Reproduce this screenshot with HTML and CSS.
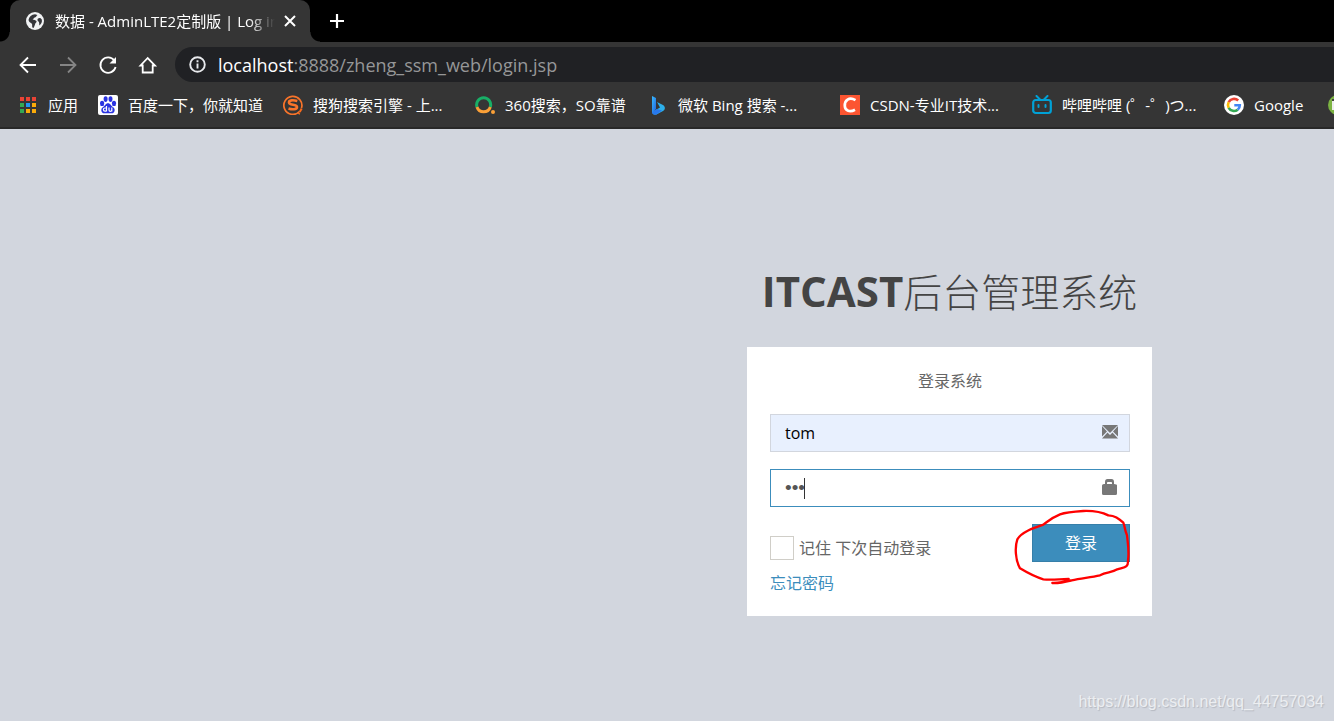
FILE: index.html
```html
<!DOCTYPE html>
<html lang="zh-CN">
<head>
<meta charset="utf-8">
<title>数据 - AdminLTE2定制版 | Log in</title>
<link rel="stylesheet" href="styles.css">
</head>
<body>
<header class="browser">
  <div class="tabs">
    <div class="tab">
      <svg class="favicon" viewBox="0 0 18 18"><circle cx="9" cy="9" r="9" fill="#f1f3f4"/><path d="M2.500 8C3 4.500 5.500 2.500 9 2.200L11.500 3C10 4 10.500 5 9 5.500C7.500 5.500 8 7 6.500 7.500C8 8 9.500 8 10.500 9C11 10.500 9 11 9 12.500C8.500 14 8 15 7.500 16C5.500 15.500 6.500 13.500 6 12C5 10.500 3 10.500 2.500 8Z" fill="#35363a"/><path d="M12 6.500C13.500 5.500 15 6 15.800 7.500C16.500 10 15 12 13.500 13.500C13 12 13.500 10.500 12.500 9.500C11.500 9 11 7.500 12 6.500Z" fill="#35363a"/></svg>
      <span class="tab-title">数据 - AdminLTE2定制版 | Log in</span>
      <button class="icon-button" aria-label="关闭"><svg width="14" height="14" viewBox="0 0 14 14"><path d="M2 2L12 12M12 2L2 12" stroke="#fff" stroke-width="2"/></svg></button>
    </div>
    <button class="icon-button new-tab" aria-label="新标签页"><svg width="16" height="16" viewBox="0 0 16 16"><path d="M8 1V15M1 8H15" stroke="#fff" stroke-width="2.200"/></svg></button>
  </div>
  <div class="toolbar">
    <nav class="controls">
      <button class="icon-button" aria-label="后退"><svg width="20" height="20" viewBox="0 0 20 20"><path d="M18 10H3M10 2.500L2.500 10L10 17.500" fill="none" stroke="#fff" stroke-width="1.800"/></svg></button>
      <button class="icon-button" aria-label="前进"><svg width="20" height="20" viewBox="0 0 20 20"><path d="M2 10H17M10 2.500L17.500 10L10 17.500" fill="none" stroke="#858585" stroke-width="1.800"/></svg></button>
      <button class="icon-button" aria-label="刷新"><svg width="20" height="20" viewBox="0 0 20 20"><path d="M16.300 5.500A7.700 7.700 0 1 0 17.600 12" fill="none" stroke="#fff" stroke-width="1.800"/><path d="M18 2V8.500H11.500Z" fill="#fff"/></svg></button>
      <button class="icon-button" aria-label="主页"><svg width="20" height="20" viewBox="0 0 20 20"><path d="M2.500 10.500H4.700V17.500H14.700V10.500H17L9.700 3Z" fill="none" stroke="#fff" stroke-width="1.800"/></svg></button>
    </nav>
    <div class="omnibox">
      <svg width="17" height="17" viewBox="0 0 17 17"><circle cx="8.500" cy="8.500" r="7.300" fill="none" stroke="#e8eaed" stroke-width="1.900"/><path d="M8.500 7.500V12.500M8.500 4.300V6.200" stroke="#e8eaed" stroke-width="1.900"/></svg>
      <span class="url"><span class="host">localhost</span>:8888/zheng_ssm_web/login.jsp</span>
    </div>
  </div>
  <nav class="bookmarks">
    <a class="bookmark apps" href="#"><svg viewBox="0 0 20 20"><g fill="#ea4335"><path d="M2 2h4v4H2zM8 2h4v4H8zM14 2h4v4h-4z"/></g><path d="M2 8h4v4H2zM2 14h4v4H2z" fill="#34a853"/><path d="M8 8h4v4H8z" fill="#2196f3"/><path d="M14 8h4v4h-4zM8 14h4v4H8zM14 14h4v4h-4z" fill="#fbab09"/></svg><span>应用</span></a>
    <a class="bookmark baidu" href="#"><svg viewBox="0 0 20 20"><rect width="20" height="20" rx="2" fill="#fff"/><g fill="#2932e1"><ellipse cx="4.100" cy="8.400" rx="2.100" ry="2.700"/><ellipse cx="7.600" cy="4.100" rx="2" ry="2.800"/><ellipse cx="12.500" cy="4.100" rx="2" ry="2.800"/><ellipse cx="16" cy="8.400" rx="2.100" ry="2.700"/><path d="M10 8.200C12.500 8.200 13 11 15.200 12.200C18 14.300 16.500 18.500 13.500 18.300H6.500C3.500 18.500 2 14.300 4.800 12.200C7 11 7.500 8.200 10 8.200Z"/></g><path d="M8.500 11V16.300M8.500 13H7A1.500 1.500 0 0 0 7 16.200H8.500M11 12.500V15A1.300 1.300 0 0 0 13.800 15V12.500M13.800 15V16.500" fill="none" stroke="#fff" stroke-width="1.200"/></svg><span>百度一下，你就知道</span></a>
    <a class="bookmark long" href="#"><svg viewBox="0 0 20 20"><path d="M16.500 16.500A9 9 0 1 1 18.500 13" fill="none" stroke="#f9742a" stroke-width="1.700"/><path d="M14.300 6C10 4.800 6 5 6 7.500C6 10.500 14 9 14 12C14 14.800 9 14.700 5.500 13.500" fill="none" stroke="#f9742a" stroke-width="2.600"/><path d="M18.700 13.500L16.700 17M16.400 18L15.700 19.200" stroke="#f96a1b" stroke-width="2"/></svg><span>搜狗搜索引擎 - 上...</span></a>
    <a class="bookmark so" href="#"><svg viewBox="0 0 20 20"><path d="M2 12A7 7 0 1 1 15.300 12" fill="none" stroke="#18af67" stroke-width="3"/><path d="M2 12A7 7 0 0 0 15.300 12" fill="none" stroke="#fba037" stroke-width="3"/><circle cx="18" cy="17" r="2" fill="#fba037"/></svg><span>360搜索，SO靠谱</span></a>
    <a class="bookmark long" href="#"><svg viewBox="0 0 20 20"><defs><linearGradient id="bing" x2="1" y2="1"><stop stop-color="#37bdff"/><stop offset="1" stop-color="#2461db"/></linearGradient></defs><path d="M4 1L8 3V14L4 18Z" fill="url(#bing)"/><path d="M4 17L12 12.500L9 7L15 10C18 12 17 15 15 16L8.500 19.500C6 20 4 19 4 17Z" fill="#2dafe9"/><path d="M4 17L9 14L14 15.500L8.500 19.500C6 20 4 19 4 17Z" fill="#2877ed"/></svg><span>微软 Bing 搜索 -...</span></a>
    <a class="bookmark long" href="#"><svg viewBox="0 0 20 20"><path d="M0 0h20v20H0z" fill="#fc5531"/><path d="M15.500 5.200C9 1.500 4.500 5.500 4.800 11C5 16 10 17.500 15 14.800" fill="none" stroke="#fff" stroke-width="2.700"/></svg><span>CSDN-专业IT技术...</span></a>
    <a class="bookmark long" href="#"><svg viewBox="0 0 20 20"><rect x="1.200" y="5" width="17.600" height="13" rx="2.500" fill="none" stroke="#00a1d6" stroke-width="2.200"/><path d="M4.500 1L8 4.500M15.500 1L12 4.500M6.500 10V12M13.500 10V12" stroke="#00a1d6" stroke-width="2" stroke-linecap="round"/></svg><span>哔哩哔哩 (゜-゜)つ...</span></a>
    <a class="bookmark google" href="#"><svg viewBox="0 0 20 20"><circle cx="10" cy="10" r="10" fill="#fff"/><g fill="none" stroke-width="2.600"><path d="M14.200 5.500A6 6 0 0 0 4.700 7.200" stroke="#ea4335"/><path d="M4.700 7.200A6 6 0 0 0 4.700 12.800" stroke="#fbbc05"/><path d="M4.700 12.800A6 6 0 0 0 13.700 14.700" stroke="#34a853"/><path d="M13.700 14.700A6 6 0 0 0 15.800 10.200H10.300" stroke="#4285f4"/></g></svg><span>Google</span></a>
    <a class="bookmark" href="#" aria-label="书签"><svg viewBox="0 0 20 20"><circle cx="10" cy="10" r="10" fill="#7cb342"/><path d="M4 6h12v9H4z" fill="#eee"/><path d="M4 4h12v2H4z" fill="#444"/></svg></a>
  </nav>
</header>
<main class="page">
  <div class="login-box">
    <h1 class="logo"><b>ITCAST</b>后台管理系统</h1>
    <form class="login-body">
      <p class="message">登录系统</p>
      <div class="field">
        <input class="control filled" type="text" value="tom" aria-label="用户名">
        <svg class="feedback" viewBox="0 0 18 16"><path d="M1 1H17L9 9ZM1 2L6 7.500L1 12.500ZM17 2V12.500L12 7.500ZM6.500 8.500L9 11L11.500 8.500L17 14.500H1Z" fill="#777"/></svg>
      </div>
      <div class="field">
        <input class="control active" type="password" value="tom" aria-label="密码">
        <span class="caret"></span>
        <svg class="feedback" viewBox="0 0 18 16"><path d="M1 6.500Q1 5 3 5H4V3Q4 0 6.500 0H10.500Q13 0 13 3V5Q16 5 16 6.500V14.500Q16 16 14.500 16H2.500Q1 16 1 14.500ZM6 5H11V3.500Q11 3 10 3H7Q6 3 6 3.500Z" fill="#777"/></svg>
      </div>
      <div class="actions">
        <div class="options">
          <label class="remember"><input type="checkbox">记住 下次自动登录</label>
          <a class="forgot" href="#">忘记密码</a>
        </div>
        <div class="submit-wrap">
          <button class="submit" type="button">登录</button>
          <svg class="scribble" viewBox="36 320 360 240"><path d="M157 548C180 549 195 545 215 540C245 533 270 532 300 525C320 514 335 518 352 507C375 500 385 502 384 480C388 455 384 430 381 405C374 390 374 375 370 367C355 354 345 346 325 345C305 335 280 331 250 332C220 334 195 337 180 342C155 352 145 362 130 373C100 383 65 395 52 417C44 440 46 480 60 504C80 516 105 530 130 537C155 540 180 536 206 536" fill="none" stroke="#f00" stroke-width="7" stroke-linecap="round" stroke-linejoin="round"/></svg>
        </div>
      </div>
    </form>
  </div>
  <p class="watermark">https://blog.csdn.net/qq_44757034</p>
</main>
</body>
</html>
```
FILE: styles.css
```css
* { box-sizing: border-box; }
body {
  margin: 0;
  min-height: 100vh;
  display: flex;
  flex-direction: column;
  background: #d2d6de;
  font: 16px/24px "Open Sans", "Noto Sans CJK SC", sans-serif;
  color: #666;
  overflow-x: hidden;
}
p, h1 { margin: 0; }
a { text-decoration: none; }
svg { display: block; flex: none; }

.browser {
  background: #353535;
  color: #fff;
  border-bottom: 2px solid #282828;
  overflow: hidden;
}
.tabs {
  display: flex;
  align-items: center;
  height: 42px;
  padding-left: 10px;
  background: #000;
}
.tab {
  display: flex;
  align-items: center;
  position: relative;
  width: 300px;
  height: 42px;
  padding: 0 13px 0 16px;
  background: #353535;
  border-radius: 10px 10px 0 0;
}
.tab::before,
.tab::after {
  content: "";
  position: absolute;
  bottom: 0;
  width: 10px;
  height: 10px;
}
.tab::before {
  right: 100%;
  background: radial-gradient(circle at 0 0, #000 9px, #353535 10px);
}
.tab::after {
  left: 100%;
  background: radial-gradient(circle at 100% 0, #000 9px, #353535 10px);
}
.favicon { width: 18px; height: 18px; }
.tab-title {
  flex: 1;
  margin: 0 8px 0 11px;
  overflow: hidden;
  white-space: nowrap;
  font-size: 15px;
  mask-image: linear-gradient(to right, #000 88%, transparent);
}
.icon-button {
  padding: 0;
  border: 0;
  background: none;
}
.new-tab { margin-left: 19px; }
.toolbar {
  display: flex;
  align-items: center;
  padding-top: 5px;
}
.controls {
  display: flex;
  gap: 20px;
  padding: 0 17px 0 18px;
}
.omnibox {
  flex: 1;
  display: flex;
  align-items: center;
  gap: 12px;
  height: 35px;
  padding-left: 14px;
  background: #202124;
  border-radius: 18px 0 0 18px;
}
.url {
  font-size: 18px;
  color: #969798;
}
.host { color: #fff; }
.bookmarks {
  display: flex;
  align-items: center;
  gap: 20px;
  height: 45px;
  padding-left: 18px;
}
.bookmark {
  flex: none;
  display: flex;
  align-items: center;
  gap: 10px;
  color: #fff;
  font-size: 15px;
  white-space: nowrap;
}
.bookmark svg { width: 20px; height: 20px; }
.baidu { width: 165px; }
.so { width: 153px; }
.long { width: 172px; }
.google { width: 84px; }

.page {
  flex: 1;
  display: flex;
  flex-direction: column;
  justify-content: space-between;
}
.login-box {
  width: 405px;
  margin-left: 56%;
  padding-top: 137px;
}
.logo {
  margin-bottom: 30px;
  text-align: center;
  white-space: nowrap;
  font-size: 39px;
  line-height: 50px;
  font-weight: 300;
  color: #444;
}
.logo b {
  font-size: 42px;
  font-weight: 700;
}
.login-body {
  padding: 22px 22px 21px 23px;
  background: #fff;
}
.message {
  margin-bottom: 21px;
  text-align: center;
}
.field {
  position: relative;
  margin-bottom: 17px;
}
.control {
  display: block;
  width: 100%;
  height: 38px;
  padding: 0 44px 0 14px;
  border: 1px solid #d2d6de;
  border-radius: 0;
  outline: 0;
  background: #fff;
  font: inherit;
  color: #555;
}
.filled { background: #e8f0fe; color: #000; }
.active {
  border-color: #3c8dbc;
  font-family: "Liberation Sans", sans-serif;
  font-size: 19px;
}
.caret {
  position: absolute;
  left: 34px;
  top: 9px;
  width: 1px;
  height: 21px;
  background: #333;
}
.feedback {
  position: absolute;
  right: 11px;
  top: 10px;
  width: 18px;
  height: 16px;
}
.actions {
  display: flex;
  justify-content: space-between;
  align-items: flex-start;
}
.options {
  display: flex;
  flex-direction: column;
  align-items: flex-start;
  gap: 11px;
  padding-top: 12px;
}
.remember {
  display: flex;
  align-items: center;
  gap: 5px;
}
.remember input {
  appearance: none;
  width: 24px;
  height: 24px;
  margin: 0;
  border: 1px solid #d0cec8;
  background: #fff;
}
.forgot { color: #3c8dbc; }
.submit-wrap { position: relative; }
.submit {
  display: block;
  width: 98px;
  height: 38px;
  border: 1px solid #367fa9;
  background: #3c8dbc;
  color: #fff;
  font: inherit;
}
.scribble {
  position: absolute;
  left: -20px;
  top: -17px;
  width: 120px;
  height: 80px;
  pointer-events: none;
}
.watermark {
  padding: 0 10px 7px;
  text-align: right;
  font-family: "Liberation Sans", sans-serif;
  color: #eceef1;
  text-shadow: 1px 1px 1px #b4b8c0;
}
```
